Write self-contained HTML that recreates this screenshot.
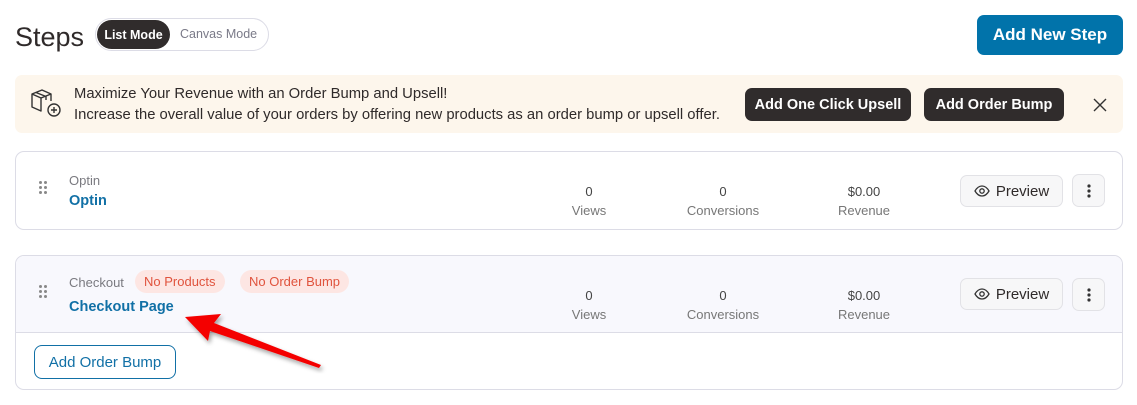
<!DOCTYPE html>
<html><head><meta charset="utf-8"><style>
*{box-sizing:border-box;margin:0;padding:0}
body{width:1137px;height:405px;background:#fff;font-family:"Liberation Sans",sans-serif;position:relative;overflow:hidden;color:#2f2a2a}
.abs{position:absolute}
.card{position:absolute;left:15px;width:1108px;border:1px solid #dcdce6;border-radius:9px;background:#fff;overflow:hidden}
.lbl{font-size:13px;color:#7a7a80}
.link{font-size:14.5px;font-weight:bold;color:#1170a6}
.stat{position:absolute;text-align:center;width:120px;font-size:13px;color:#555}
.stat .n{color:#444}
.stat .l{color:#777;margin-top:4px}
.btnp{position:absolute;border:1px solid #e2e2e6;background:#f7f7f8;border-radius:7px;font-size:15px;color:#2f2a2a;display:flex;align-items:center;justify-content:center}
.dots{position:absolute;width:8px;height:14px}
.dots i{position:absolute;width:3px;height:3px;border-radius:50%;background:#888}
.badge{position:absolute;top:14px;height:23px;border-radius:12px;background:#fde6e3;color:#e0533d;font-size:13px;display:flex;align-items:center;padding:0 9px}
</style></head><body>
<div class="abs" style="left:15px;top:22px;font-size:27px;color:#2f2a2a">Steps</div>
<div class="abs" style="left:95px;top:18px;width:174px;height:33px;border:1px solid #dcdce6;border-radius:17px"></div>
<div class="abs" style="left:97px;top:20px;width:73px;height:29px;background:#302c2c;border-radius:15px;color:#fff;font-size:12.5px;font-weight:bold;display:flex;align-items:center;justify-content:center">List Mode</div>
<div class="abs" style="left:180px;top:27px;font-size:12.5px;color:#7a7a88">Canvas Mode</div>
<div class="abs" style="left:977px;top:15px;width:146px;height:40px;background:#0173aa;border-radius:7px;color:#fff;font-size:17px;font-weight:bold;display:flex;align-items:center;justify-content:center">Add New Step</div>

<div class="abs" style="left:15px;top:75px;width:1108px;height:58px;background:#fdf6ec;border-radius:7px"></div>
<svg class="abs" style="left:29px;top:86px" width="34" height="34" viewBox="0 0 34 32" fill="none" stroke="#333" stroke-width="1.4" stroke-linejoin="round">
<path d="M3 7 L13 3 L22 7 L12 11 Z M3 7 V20 L12 24 V11 M22 7 V14 M7 5.5 L17 9.5 V13"/>
<circle cx="25" cy="23" r="6"/><path d="M25 20 V26 M22 23 H28"/></svg>
<div class="abs" style="left:74px;top:86px;font-size:14.8px;color:#2f2a2a">Maximize Your Revenue with an Order Bump and Upsell!</div>
<div class="abs" style="left:74px;top:107px;font-size:14.8px;color:#2f2a2a">Increase the overall value of your orders by offering new products as an order bump or upsell offer.</div>
<div class="abs" style="left:745px;top:88px;width:166px;height:33px;background:#302c2c;border-radius:7px;color:#fff;font-size:14.5px;font-weight:bold;display:flex;align-items:center;justify-content:center">Add One Click Upsell</div>
<div class="abs" style="left:924px;top:88px;width:140px;height:33px;background:#302c2c;border-radius:7px;color:#fff;font-size:14.5px;font-weight:bold;display:flex;align-items:center;justify-content:center">Add Order Bump</div>
<svg class="abs" style="left:1093px;top:98px" width="14" height="14" viewBox="0 0 14 14" stroke="#333" stroke-width="1.4"><path d="M1 1L13 13M13 1L1 13"/></svg>

<div class="card" style="top:151px;height:79px">
 <div class="dots" style="left:23px;top:29px"><i style="left:0;top:0"></i><i style="left:5px;top:0"></i><i style="left:0;top:5px"></i><i style="left:5px;top:5px"></i><i style="left:0;top:10px"></i><i style="left:5px;top:10px"></i></div>
 <div class="abs lbl" style="left:53px;top:21px">Optin</div>
 <div class="abs link" style="left:53px;top:41px">Optin</div>
 <div class="stat" style="left:513px;top:32px"><div class="n">0</div><div class="l">Views</div></div>
 <div class="stat" style="left:647px;top:32px"><div class="n">0</div><div class="l">Conversions</div></div>
 <div class="stat" style="left:788px;top:32px"><div class="n">$0.00</div><div class="l">Revenue</div></div>
 <div class="btnp" style="left:944px;top:23px;width:103px;height:32px"><svg width="16" height="12" viewBox="0 0 16 12" fill="none" stroke="#333" stroke-width="1.3" style="margin-right:6px"><path d="M1 6C3 2.5 5.5 1 8 1s5 1.5 7 5c-2 3.5-4.5 5-7 5S3 9.5 1 6Z"/><circle cx="8" cy="6" r="2.2"/></svg>Preview</div>
 <div class="btnp" style="left:1056px;top:22px;width:33px;height:33px"><svg width="4" height="14"><circle cx="2" cy="2" r="1.6" fill="#333"/><circle cx="2" cy="7" r="1.6" fill="#333"/><circle cx="2" cy="12" r="1.6" fill="#333"/></svg></div>
</div>

<div class="card" style="top:255px;height:135px">
 <div class="abs" style="left:0;top:0;width:1108px;height:77px;background:#f8f8fd;border-bottom:1px solid #dcdce6"></div>
 <div class="dots" style="left:23px;top:29px"><i style="left:0;top:0"></i><i style="left:5px;top:0"></i><i style="left:0;top:5px"></i><i style="left:5px;top:5px"></i><i style="left:0;top:10px"></i><i style="left:5px;top:10px"></i></div>
 <div class="abs lbl" style="left:53px;top:19px">Checkout</div>
 <div class="badge" style="left:119px">No Products</div>
 <div class="badge" style="left:224px">No Order Bump</div>
 <div class="abs link" style="left:53px;top:43px">Checkout Page</div>
 <div class="stat" style="left:513px;top:32px"><div class="n">0</div><div class="l">Views</div></div>
 <div class="stat" style="left:647px;top:32px"><div class="n">0</div><div class="l">Conversions</div></div>
 <div class="stat" style="left:788px;top:32px"><div class="n">$0.00</div><div class="l">Revenue</div></div>
 <div class="btnp" style="left:944px;top:22px;width:103px;height:32px"><svg width="16" height="12" viewBox="0 0 16 12" fill="none" stroke="#333" stroke-width="1.3" style="margin-right:6px"><path d="M1 6C3 2.5 5.5 1 8 1s5 1.5 7 5c-2 3.5-4.5 5-7 5S3 9.5 1 6Z"/><circle cx="8" cy="6" r="2.2"/></svg>Preview</div>
 <div class="btnp" style="left:1056px;top:22px;width:33px;height:33px"><svg width="4" height="14"><circle cx="2" cy="2" r="1.6" fill="#333"/><circle cx="2" cy="7" r="1.6" fill="#333"/><circle cx="2" cy="12" r="1.6" fill="#333"/></svg></div>
 <div class="abs" style="left:18px;top:89px;width:142px;height:34px;border:1px solid #1170a6;border-radius:8px;color:#1170a6;font-size:15px;display:flex;align-items:center;justify-content:center">Add Order Bump</div>
</div>

<svg class="abs" style="left:0;top:0" width="1137" height="405">
<defs><filter id="s"><feDropShadow dx="2" dy="3" stdDeviation="2" flood-opacity="0.35"/></filter></defs>
<path d="M185 317 L221 314 L214 323 L321 365 L319 368 L210 331 L208 341 Z" fill="#f40000" filter="url(#s)"/>
</svg>
</body></html>
